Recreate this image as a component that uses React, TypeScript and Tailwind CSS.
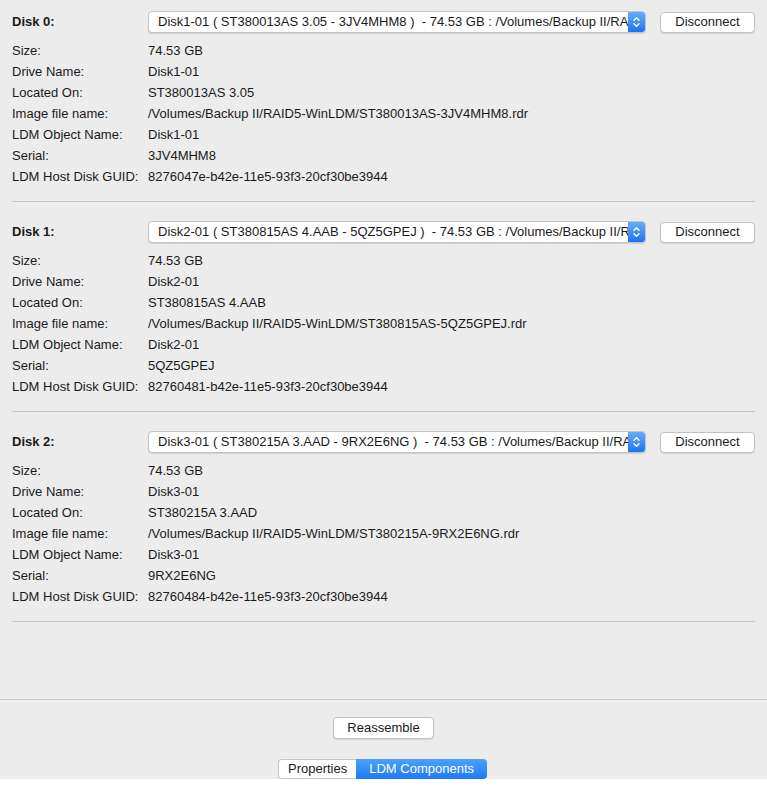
const disks = [
  {
    label: 'Disk 0:',
    popup: 'Disk1-01 ( ST380013AS 3.05 - 3JV4MHM8 )  - 74.53 GB : /Volumes/Backup II/RAID5-WinLDM/ST380013AS-3JV4MHM8.rdr',
    rows: [
      ['Size:', '74.53 GB'],
      ['Drive Name:', 'Disk1-01'],
      ['Located On:', 'ST380013AS 3.05'],
      ['Image file name:', '/Volumes/Backup II/RAID5-WinLDM/ST380013AS-3JV4MHM8.rdr'],
      ['LDM Object Name:', 'Disk1-01'],
      ['Serial:', '3JV4MHM8'],
      ['LDM Host Disk GUID:', '8276047e-b42e-11e5-93f3-20cf30be3944'],
    ],
  },
  {
    label: 'Disk 1:',
    popup: 'Disk2-01 ( ST380815AS 4.AAB - 5QZ5GPEJ )  - 74.53 GB : /Volumes/Backup II/RAID5-WinLDM/ST380815AS-5QZ5GPEJ.rdr',
    rows: [
      ['Size:', '74.53 GB'],
      ['Drive Name:', 'Disk2-01'],
      ['Located On:', 'ST380815AS 4.AAB'],
      ['Image file name:', '/Volumes/Backup II/RAID5-WinLDM/ST380815AS-5QZ5GPEJ.rdr'],
      ['LDM Object Name:', 'Disk2-01'],
      ['Serial:', '5QZ5GPEJ'],
      ['LDM Host Disk GUID:', '82760481-b42e-11e5-93f3-20cf30be3944'],
    ],
  },
  {
    label: 'Disk 2:',
    popup: 'Disk3-01 ( ST380215A 3.AAD - 9RX2E6NG )  - 74.53 GB : /Volumes/Backup II/RAID5-WinLDM/ST380215A-9RX2E6NG.rdr',
    rows: [
      ['Size:', '74.53 GB'],
      ['Drive Name:', 'Disk3-01'],
      ['Located On:', 'ST380215A 3.AAD'],
      ['Image file name:', '/Volumes/Backup II/RAID5-WinLDM/ST380215A-9RX2E6NG.rdr'],
      ['LDM Object Name:', 'Disk3-01'],
      ['Serial:', '9RX2E6NG'],
      ['LDM Host Disk GUID:', '82760484-b42e-11e5-93f3-20cf30be3944'],
    ],
  },
];

function PopupButton({ text }: { text: string }) {
  return (
    <div className="flex h-[22px] w-[498px] overflow-hidden rounded-[4px] border border-[#c4c4c4] bg-white shadow-[0_1px_1px_rgba(0,0,0,0.12)]">
      <div className="min-w-0 flex-1 overflow-hidden whitespace-pre pl-[9px] leading-[20px]">{text}</div>
      <div className="flex w-[17px] items-center justify-center bg-gradient-to-b from-[#65acf8] to-[#1a74ef]">
        <svg width="7" height="12" viewBox="0 0 7 12" fill="none" stroke="white" strokeWidth="1.4" strokeLinecap="round" strokeLinejoin="round">
          <path d="M1 4.2 L3.5 1.7 L6 4.2" />
          <path d="M1 7.8 L3.5 10.3 L6 7.8" />
        </svg>
      </div>
    </div>
  );
}

function PushButton({ children, className = '' }: { children: React.ReactNode; className?: string }) {
  return (
    <div
      className={[
        'flex h-[21px] items-center justify-center whitespace-nowrap rounded-[4px] border border-[#c2c2c2] bg-white shadow-[0_1px_1px_rgba(0,0,0,0.1)]',
        className,
      ].join(' ')}
    >
      {children}
    </div>
  );
}

export default function App() {
  return (
    <div
      className="flex h-[786px] w-[767px] flex-col bg-[#ececec] text-[13px] text-[#1a1a1a]"
      style={{ fontFamily: '"Liberation Sans", Arial, sans-serif' }}
    >
      <div className="flex-1 px-[12px] pt-[11px]">
        {disks.map((disk, i) => (
          <div key={disk.label} className={i > 0 ? 'pt-[19px]' : ''}>
            {/* header row */}
            <div className="flex h-[22px] items-center">
              <div className="w-[136px] shrink-0 font-bold">{disk.label}</div>
              <PopupButton text={disk.popup} />
              <PushButton className="ml-[14px] w-[95px] shrink-0">Disconnect</PushButton>
            </div>

            {/* details */}
            <div className="mt-[7px]">
              {disk.rows.map(([k, v]) => (
                <div key={k} className="flex h-[21px] items-center">
                  <div className="w-[136px] whitespace-nowrap">{k}</div>
                  <div className="whitespace-nowrap">{v}</div>
                </div>
              ))}
            </div>

            <div className="mt-[14px] h-px bg-[#c6c6c6]" />
          </div>
        ))}
      </div>

      {/* bottom bar */}
      <div className="h-px bg-[#c8c8c8]" />
      <div className="flex justify-center pt-[17px]">
        <PushButton className="h-[22px] w-[101px]">Reassemble</PushButton>
      </div>
      <div className="mt-[20px] flex justify-center pr-[2px]">
        <div className="flex h-[20px] items-center rounded-l-[4px] border border-r-0 border-[#c6c6c6] bg-white px-[9px]">
          Properties
        </div>
        <div className="flex h-[20px] items-center rounded-r-[4px] bg-gradient-to-b from-[#4ba0f8] to-[#1c7bf2] px-[13px] text-white">
          LDM Components
        </div>
      </div>
      <div className="h-[7px] bg-white" />
    </div>
  );
}
